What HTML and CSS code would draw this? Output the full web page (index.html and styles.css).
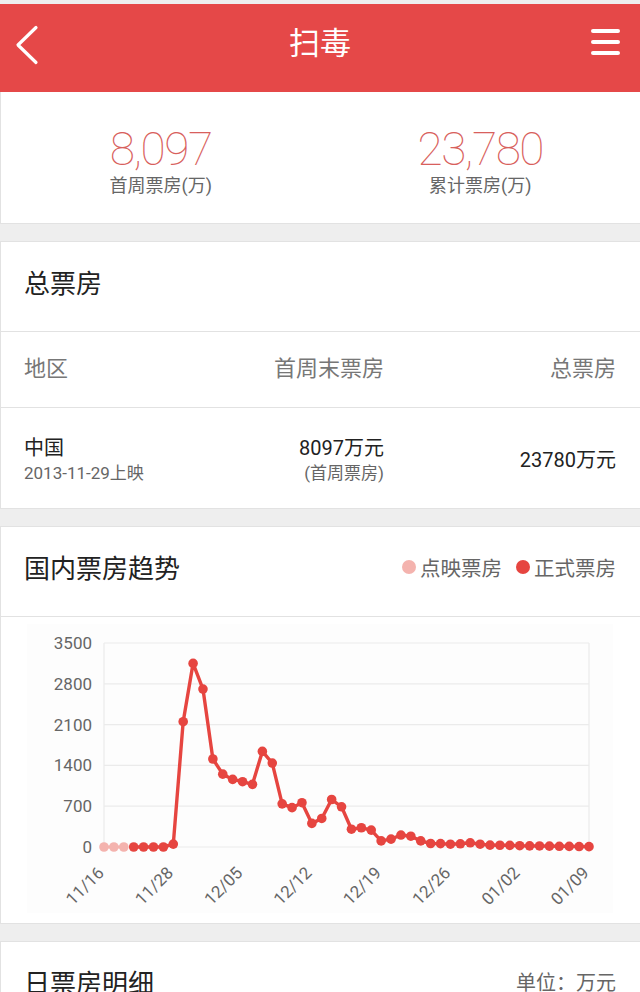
FILE: index.html
```html
<!DOCTYPE html>
<html lang="zh-CN">
<head>
    <meta charset="UTF-8">
    <meta name="viewport" content="width=device-width, initial-scale=1.0">
    <title>扫毒 - 票房</title>
    <link rel="stylesheet" href="styles.css">
</head>
<body>
    <header class="topbar">
        <button class="topbar-btn back-btn" aria-label="返回">
            <svg width="24" height="40" viewBox="0 0 24 40">
                <polyline points="21,2.5 3,20 21,37.5" fill="none" stroke="#fff" stroke-width="3.2" stroke-linecap="round" stroke-linejoin="round"/>
            </svg>
        </button>
        <h1 class="topbar-title">扫毒</h1>
        <button class="topbar-btn menu-btn" aria-label="菜单">
            <svg width="35" height="30" viewBox="0 0 35 30">
                <g stroke="#fff" stroke-width="4" stroke-linecap="round">
                    <line x1="3" y1="4" x2="28" y2="4"/>
                    <line x1="3" y1="15" x2="28" y2="15"/>
                    <line x1="3" y1="26" x2="28" y2="26"/>
                </g>
            </svg>
        </button>
    </header>

    <section class="summary">
        <div class="summary-item">
            <div class="summary-num">8,097</div>
            <div class="summary-label">首周票房(万)</div>
        </div>
        <div class="summary-item">
            <div class="summary-num">23,780</div>
            <div class="summary-label">累计票房(万)</div>
        </div>
    </section>

    <section class="card">
        <div class="card-head">
            <h2 class="card-title">总票房</h2>
        </div>
        <div class="table-row table-head">
            <div>地区</div>
            <div class="cell-right">首周末票房</div>
            <div class="cell-right">总票房</div>
        </div>
        <div class="table-row table-body">
            <div>
                <div class="cell-main">中国</div>
                <div class="cell-sub">2013-11-29上映</div>
            </div>
            <div class="cell-right">
                <div class="cell-main">8097万元</div>
                <div class="cell-sub">(首周票房)</div>
            </div>
            <div class="cell-right">
                <div class="cell-main">23780万元</div>
            </div>
        </div>
    </section>

    <section class="card">
        <div class="card-head">
            <h2 class="card-title">国内票房趋势</h2>
            <div class="legend">
                <span class="legend-item"><span class="legend-dot dot-preview"></span>点映票房</span>
                <span class="legend-item"><span class="legend-dot dot-main"></span>正式票房</span>
            </div>
        </div>
        <div class="chart-wrap">
            <svg id="trend-chart" width="586" height="289" viewBox="0 0 586 289"></svg>
        </div>
    </section>

    <section class="card">
        <div class="card-head">
            <h2 class="card-title">日票房明细</h2>
            <span class="card-unit">单位：万元</span>
        </div>
    </section>

    <script>
        const chart = document.getElementById('trend-chart');

        // daily box office, first three are previews
        const values = [
            0, 0, 0, 0, 0, 0, 0, 50, 2150, 3150,
            2710, 1510, 1250, 1160, 1120, 1075, 1640, 1440, 740, 675,
            760, 405, 490, 815, 690, 305, 330, 290, 105, 135,
            205, 185, 105, 60, 58, 48, 55, 72, 48, 32,
            30, 28, 22, 20, 18, 15, 12, 10, 8, 6
        ];
        const previewCount = 3;
        const xLabels = ['11/16', '11/28', '12/05', '12/12', '12/19', '12/26', '01/02', '01/09'];

        const plot = { left: 77, right: 562, top: 19, bottom: 223, max: 3500 };
        const stepX = (plot.right - plot.left) / (values.length - 1);

        function px(i) { return plot.left + i * stepX; }
        function py(v) { return plot.bottom - v / plot.max * (plot.bottom - plot.top); }

        let svg = '<rect x="0" y="0" width="586" height="289" fill="#fdfdfd"/>';

        // grid
        for (let k = 0; k <= 5; k++) {
            const y = plot.top + k * (plot.bottom - plot.top) / 5;
            svg += `<line x1="${plot.left}" y1="${y}" x2="${plot.right}" y2="${y}" class="grid-line"/>`;
            svg += `<text x="65" y="${y + 6}" class="axis-text" text-anchor="end">${3500 - k * 700}</text>`;
        }
        svg += `<line x1="${plot.left}" y1="${plot.top}" x2="${plot.left}" y2="${plot.bottom}" class="grid-line"/>`;
        svg += `<line x1="${plot.right}" y1="${plot.top}" x2="${plot.right}" y2="${plot.bottom}" class="grid-line"/>`;

        // x labels every 7 points
        xLabels.forEach((label, n) => {
            const x = px(n * 7) + 1;
            const y = 250;
            svg += `<text x="${x}" y="${y}" class="axis-text" text-anchor="end" transform="rotate(-45 ${x} ${y})">${label}</text>`;
        });

        // preview series
        const previewPts = values.slice(0, previewCount).map((v, i) => `${px(i)},${py(v)}`).join(' ');
        svg += `<polyline points="${previewPts}" class="line-preview"/>`;

        // main series
        const mainPts = values.slice(previewCount).map((v, i) => `${px(i + previewCount)},${py(v)}`).join(' ');
        svg += `<polyline points="${mainPts}" class="line-main"/>`;

        values.forEach((v, i) => {
            const cls = i < previewCount ? 'dot-preview-fill' : 'dot-main-fill';
            svg += `<circle cx="${px(i)}" cy="${py(v)}" r="4.8" class="${cls}"/>`;
        });

        chart.innerHTML = svg;
    </script>
</body>
</html>
```

FILE: styles.css
```css
body {
    margin: 0;
    padding: 4px 0 0;
    background-color: #eeeeee;
    font-family: 'Roboto', 'Noto Sans CJK SC', sans-serif;
    color: #222;
}

.topbar {
    height: 88px;
    background-color: #e54848;
    display: flex;
    align-items: center;
    padding: 0 16px 6px 15px;
    box-sizing: border-box;
}

.topbar-btn {
    width: 40px;
    background: none;
    border: none;
    padding: 0;
    display: flex;
    cursor: pointer;
}

.menu-btn {
    justify-content: flex-end;
    margin-bottom: 6px;
    margin-right: -1px;
}

.topbar-title {
    flex: 1;
    margin: 0 0 4px;
    text-align: center;
    font-size: 31px;
    font-weight: normal;
    color: #fff;
    line-height: 1;
}

.summary {
    display: flex;
    background-color: #fff;
    height: 132px;
    box-sizing: border-box;
    padding-top: 32px;
    border-bottom: 1px solid #e2e2e2;
    border-left: 1px solid #e2e2e2;
}

.summary-item {
    flex: 1;
    text-align: center;
}

.summary-num {
    font-size: 46px;
    font-weight: 100;
    line-height: 50px;
    color: #d8605c;
    letter-spacing: -1.5px;
}

.summary-label {
    font-size: 18px;
    line-height: 24px;
    color: #666;
}

.card {
    background-color: #fff;
    margin-top: 17px;
    border-top: 1px solid #e2e2e2;
    border-bottom: 1px solid #e2e2e2;
    border-left: 1px solid #e2e2e2;
}

.card-head {
    height: 90px;
    box-sizing: border-box;
    display: flex;
    align-items: center;
    justify-content: space-between;
    padding: 0 24px 10px 23px;
    border-bottom: 1px solid #e2e2e2;
}

.card:last-child .card-head {
    border-bottom: none;
}

.card-title {
    margin: 0;
    font-size: 26px;
    font-weight: normal;
    color: #222;
}

.card-unit {
    font-size: 20px;
    color: #666;
}

.table-row {
    display: grid;
    grid-template-columns: 1fr 140px 232px;
    align-items: center;
    padding: 0 24px 0 23px;
}

.table-head {
    height: 76px;
    box-sizing: border-box;
    padding-bottom: 8px;
    font-size: 22px;
    color: #777;
    border-bottom: 1px solid #e2e2e2;
}

.table-body {
    height: 100px;
    box-sizing: border-box;
    padding-top: 3px;
}

.cell-right {
    text-align: right;
}

.cell-main {
    font-size: 20px;
    line-height: 26px;
    color: #222;
}

.cell-sub {
    font-size: 17px;
    line-height: 24px;
    color: #666;
}

.legend {
    display: flex;
    gap: 14px;
    font-size: 20.5px;
    color: #666;
}

.legend-item {
    display: flex;
    align-items: center;
    gap: 4px;
}

.legend-dot {
    width: 14px;
    height: 14px;
    border-radius: 50%;
}

.dot-preview { background-color: #f4b3ae; }
.dot-main { background-color: #e64540; }

.chart-wrap {
    padding: 7px 26px 10px;
    display: flex;
}

.grid-line {
    stroke: #ebebeb;
    stroke-width: 1.2;
}

.axis-text {
    font-family: 'Roboto', sans-serif;
    font-size: 17px;
    fill: #666;
}

.line-preview {
    fill: none;
    stroke: #f4b3ae;
    stroke-width: 3;
}

.line-main {
    fill: none;
    stroke: #e64540;
    stroke-width: 3.4;
    stroke-linejoin: round;
}

.dot-preview-fill { fill: #f4b3ae; }
.dot-main-fill { fill: #e64540; }
```
